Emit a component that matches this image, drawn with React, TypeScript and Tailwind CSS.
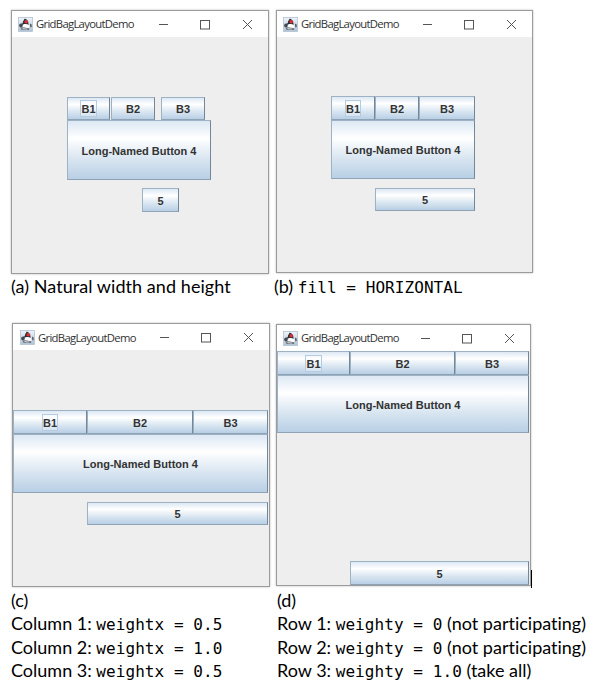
import React from "react";

const FACE =
  "bg-[linear-gradient(to_bottom,#dce8f4_0%,#ffffff_30%,#dce8f2_62%,#b8cfe5_100%)]";

function Btn({ label, className, focus }: { label: string; className: string; focus?: boolean }) {
  return (
    <div
      className={`flex shrink-0 items-center justify-center border border-t-[#9fb2c4] border-l-[#9fb2c4] border-r-[#73879b] border-b-[#8fa3b7] font-['Liberation_Sans',Arial,sans-serif] text-[11px] font-bold leading-none text-[#333] ${FACE} ${className}`}
    >
      <span
        className={`flex h-[17px] items-center whitespace-nowrap pt-[2px] ${
          focus ? "border border-[#b5cbe0] bg-white/30" : "border border-transparent"
        }`}
      >
        {label}
      </span>
    </div>
  );
}

function Duke() {
  return (
    <svg width="15" height="15" viewBox="0 0 15 15" className="block shrink-0">
      <defs>
        <linearGradient id="duke" x1="0" y1="0" x2="0" y2="1">
          <stop offset="0" stopColor="#eef4fa" />
          <stop offset="1" stopColor="#afc3d6" />
        </linearGradient>
      </defs>
      <rect x="0.5" y="0.5" width="14" height="14" fill="url(#duke)" stroke="#b4c3d1" strokeWidth="0.8" />
      <path d="M6.8 1.5 L5 4.5 L4.6 8 L6 7.2 L10.6 8.2 L10.2 4.5 L8.6 2.6 Z" fill="#2b2f35" />
      <path d="M5 6 L1.6 7 L1 9 L2.6 10.4 L4.6 9.4 Z" fill="#444a52" />
      <path d="M12 6.4 L13.6 7.4 L13.6 10 L12.4 10.6 Z" fill="#4a5058" />
      <path d="M5.4 7.4 C7 6.8 9.4 7 11 8 L11.6 11.4 L4.6 10.6 Z" fill="#ffffff" />
      <path d="M2.4 10.4 L5 10.2 L11.4 11.2 L11 13 L3.6 13 Z" fill="#6c7279" />
      <path d="M4.4 11 L9.6 11.8 L9 12.4 L4.6 12.2 Z" fill="#d5dade" />
      <circle cx="8.2" cy="4.8" r="1.8" fill="#dc3034" />
    </svg>
  );
}

function Win({
  className,
  bar,
  controls,
  children,
}: {
  className: string;
  bar: string;
  controls: string;
  children: React.ReactNode;
}) {
  return (
    <div
      className={`flex shrink-0 flex-col border border-[#9b9b9b] bg-[#eeeeee] shadow-[0_0_2px_#bbbbbb] ${className}`}
    >
      <div className={`flex h-[26px] shrink-0 items-center bg-white ${bar}`}>
        <Duke />
        <span className="ml-[3px] w-[100px] whitespace-nowrap font-['Open_Sans','Noto_Sans',sans-serif] text-[11.3px] leading-none tracking-[-0.7px] text-[#333]">
          GridBagLayoutDemo
        </span>
        <svg width="94" height="11" viewBox="0 0 94 11" className={`block shrink-0 ${controls}`}>
          <g fill="none" stroke="#555" strokeWidth="1">
            <path d="M0 5.5H9" />
            <rect x="41.5" y="1.5" width="9" height="8.5" />
            <path d="M84 1L93 10M93 1L84 10" />
          </g>
        </svg>
      </div>
      {children}
    </div>
  );
}

const TEXT =
  "whitespace-nowrap font-['Lato',sans-serif] text-[18px] leading-[23.3px] text-black [font-variant-ligatures:none]";

function Code({ children }: { children: string }) {
  return (
    <span className="whitespace-pre font-['DejaVu_Sans_Mono',monospace] text-[16px] leading-none tracking-[0.07px]">
      {children}
    </span>
  );
}

export default function App() {
  return (
    <div className="flex h-[693px] w-[606px] items-start overflow-hidden bg-white pl-[11px]">
      <div className="flex w-[265px] shrink-0 flex-col pt-[10px]">
        <Win className="h-[264px] w-[258px]" bar="pl-[6px]" controls="ml-[23px]">
          <div className="flex flex-col pl-[55px] pt-[60px]">
            <div className="flex">
              <Btn label="B1" focus className="h-[23px] w-[43px]" />
              <Btn label="B2" className="ml-px h-[23px] w-[44px]" />
              <Btn label="B3" className="ml-[6px] h-[23px] w-[44px]" />
            </div>
            <Btn label="Long-Named Button 4" className="h-[60px] w-[144px]" />
            <Btn label="5" className="ml-[75px] mt-[8px] h-[24px] w-[37px]" />
          </div>
        </Win>
        <div className={`h-[49px] pt-px tracking-[0.06px] ${TEXT}`}>(a) Natural width and height</div>
        <Win className="ml-px h-[264px] w-[258px]" bar="pl-[7px] pt-px" controls="ml-[22px]">
          <div className="flex flex-col pt-[60px]">
            <div className="flex">
              <Btn label="B1" focus className="h-[24px] w-[74px]" />
              <Btn label="B2" className="h-[24px] w-[106px]" />
              <Btn label="B3" className="h-[24px] w-[75px]" />
            </div>
            <Btn label="Long-Named Button 4" className="h-[59px] w-[255px]" />
            <Btn label="5" className="ml-[74px] mt-[9px] h-[23px] w-[181px]" />
          </div>
        </Win>
        <div className={`pt-[2px] ${TEXT}`}>
          <div>(c)</div>
          <div>Column 1: <Code>weightx = 0.5</Code></div>
          <div>Column 2: <Code>weightx = 1.0</Code></div>
          <div>Column 3: <Code>weightx = 0.5</Code></div>
        </div>
      </div>
      <div className="flex w-[330px] shrink-0 flex-col pt-[10px]">
        <Win className="h-[263px] w-[257px]" bar="pl-[6px]" controls="ml-[22px]">
          <div className="flex flex-col pl-[54px] pt-[59px]">
            <div className="flex">
              <Btn label="B1" focus className="h-[24px] w-[44px]" />
              <Btn label="B2" className="h-[24px] w-[44px]" />
              <Btn label="B3" className="h-[24px] w-[56px]" />
            </div>
            <Btn label="Long-Named Button 4" className="h-[59px] w-[144px]" />
            <Btn label="5" className="ml-[44px] mt-[9px] h-[23px] w-[100px]" />
          </div>
        </Win>
        <div className={`-ml-[2px] h-[51px] pt-[2px] ${TEXT}`}>
          (b) <Code>fill = HORIZONTAL</Code>
        </div>
        <div className="flex items-end">
          <Win className="h-[262px] w-[255px]" bar="pl-[6px]" controls="ml-[20px]">
            <div className="flex flex-1 flex-col">
              <div className="flex">
                <Btn label="B1" focus className="h-[24px] w-[73px]" />
                <Btn label="B2" className="h-[24px] w-[105px]" />
                <Btn label="B3" className="h-[24px] w-[74px]" />
              </div>
              <Btn label="Long-Named Button 4" className="h-[58px] w-[252px]" />
              <Btn label="5" className="ml-[73px] mt-auto h-[24px] w-[179px]" />
            </div>
          </Win>
          <div className="-mb-[2px] h-[18px] w-px bg-black" />
        </div>
        <div className={`pl-px pt-[3px] ${TEXT}`}>
          <div>(d)</div>
          <div>Row 1: <Code>weighty = 0</Code> (not participating)</div>
          <div>Row 2: <Code>weighty = 0</Code> (not participating)</div>
          <div>Row 3: <Code>weighty = 1.0</Code> (take all)</div>
        </div>
      </div>
    </div>
  );
}
